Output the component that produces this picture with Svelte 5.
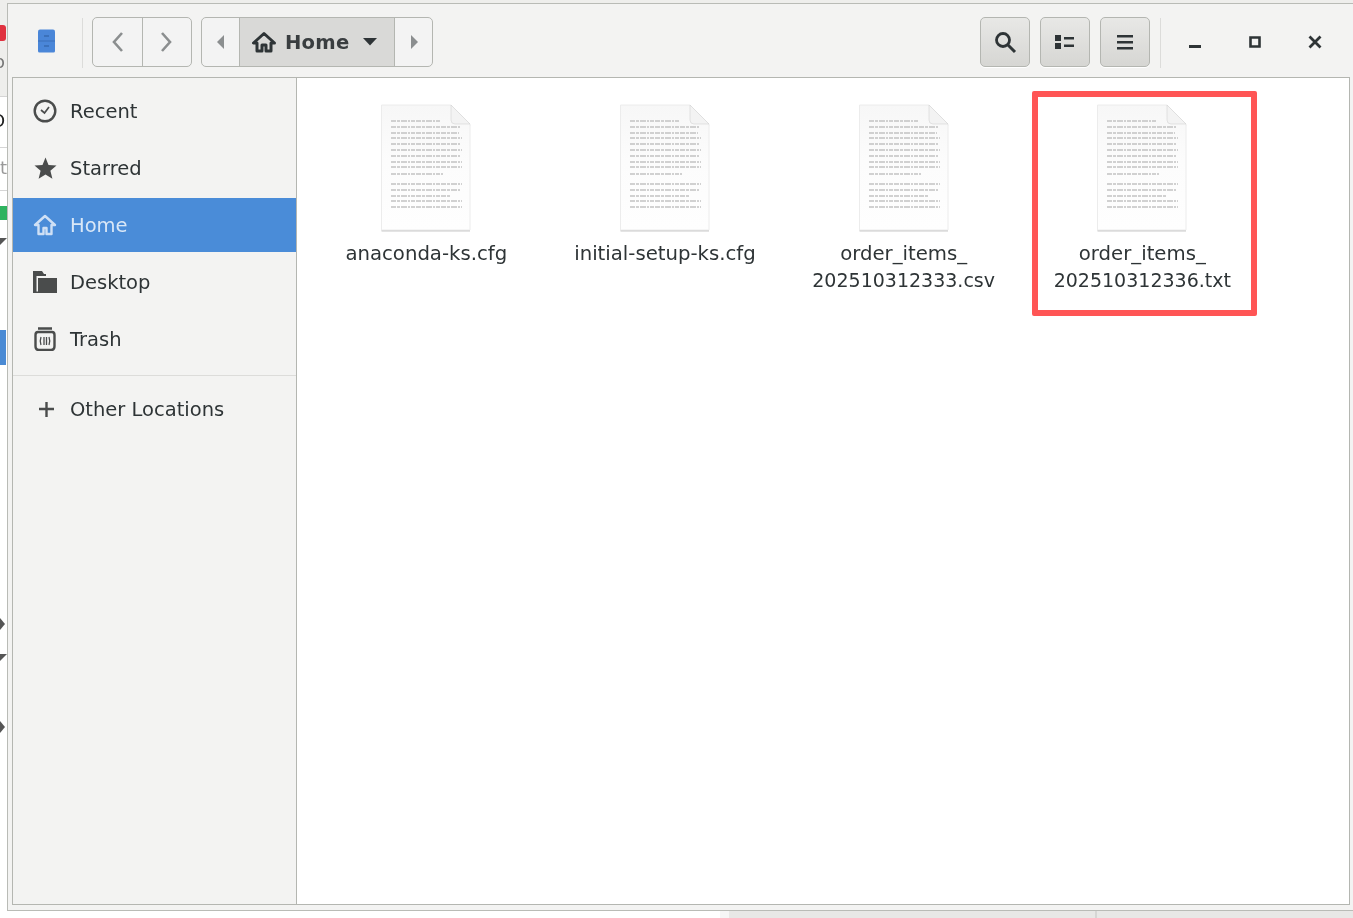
<script>
  const files = [
    { lines: ['anaconda-ks.cfg'] },
    { lines: ['initial-setup-ks.cfg'] },
    { lines: ['order_items_', '202510312333.csv'] },
    { lines: ['order_items_', '202510312336.txt'], marked: true }
  ];
  const rows = [
    { y: 18, w: 50 }, { y: 24, w: 70 }, { y: 30, w: 68 }, { y: 35, w: 71 }, { y: 41, w: 70 },
    { y: 47, w: 71 }, { y: 53, w: 70 }, { y: 59, w: 71 }, { y: 64, w: 71 }, { y: 71, w: 52 },
    { y: 81, w: 71 }, { y: 87, w: 70 }, { y: 93, w: 60 }, { y: 98, w: 71 }, { y: 104, w: 71 }
  ];
  const isNumeric = (line) => /^\d/.test(line);
</script>

<div class="desktop">
  <div class="backdrop">
    <i class="topband"></i><i class="leftband"></i>
    <i class="red"></i><i class="rule r1"></i><i class="rule r2"></i><i class="rule r3"></i>
    <i class="green"></i><i class="blue"></i>
    <i class="tri t1"></i><i class="tri t2"></i><i class="tri t3"></i><i class="tri t4"></i>
    <span class="peek p1">o</span><span class="peek p2">O</span><span class="peek p3">t</span>
    <div class="under"><span></span></div>
  </div>

  <div class="window">
    <header class="toolbar">
      <svg class="app" width="20" height="24" viewBox="0 0 20 24">
        <path d="M3 2.500q0-2 2-2h13q2 0 2 2V22q0 1.500-1.500 1.500h-14Q3 23.500 3 22z" fill="#4a86d8"/>
        <path d="M3 12h17" stroke="#3a6fb8"/>
        <path d="M9 7h5M9 17h5" stroke="#2d5c9e" stroke-width="1.200"/>
      </svg>
      <i class="sep"></i>
      <div class="group nav">
        <button aria-label="Back"><svg width="16" height="22" viewBox="0 0 16 22"><path d="M12 2 4 11l8 9" fill="none" stroke="#8b8e8f" stroke-width="2.600"/></svg></button>
        <button aria-label="Forward"><svg width="16" height="22" viewBox="0 0 16 22"><path d="m3 2 8 9-8 9" fill="none" stroke="#8b8e8f" stroke-width="2.600"/></svg></button>
      </div>
      <div class="group path">
        <button class="end" aria-label="Scroll left"><svg width="8" height="14" viewBox="0 0 8 14"><path d="M7 0v14L0 7z" fill="#8b8e8f"/></svg></button>
        <button class="current">
          <svg width="26" height="22" viewBox="0 0 26 22"><path d="M13 2.500 2.500 12H6v8h5v-6h4v6h5v-8h3.500z" fill="none" stroke="#2e3436" stroke-width="3" stroke-linejoin="round"/></svg>
          <b>Home</b>
          <svg class="caret" width="14" height="8" viewBox="0 0 14 8"><path d="M0 0h14L7 7.500z" fill="#2e3436"/></svg>
        </button>
        <button class="end" aria-label="Scroll right"><svg width="8" height="14" viewBox="0 0 8 14"><path d="M1 0v14l7-7z" fill="#8b8e8f"/></svg></button>
      </div>
      <div class="spacer"></div>
      <button class="tool" aria-label="Search"><svg width="24" height="24" viewBox="0 0 24 24"><circle cx="10" cy="10" r="6.500" fill="none" stroke="#2e3436" stroke-width="2.800"/><path d="m15 15 7 7" stroke="#2e3436" stroke-width="3"/></svg></button>
      <button class="tool" aria-label="View"><svg width="20" height="16" viewBox="0 0 20 16"><path d="M0 1h6v6H0zM0 9h6v6H0zM9 3h10v2.500H9zM9 10.500h10V13H9z" fill="#2e3436"/></svg></button>
      <button class="tool" aria-label="Menu"><svg width="18" height="16" viewBox="0 0 18 16"><path d="M1 1h16v2.500H1zM1 7h16v2.500H1zM1 13h16v2.500H1z" fill="#2e3436"/></svg></button>
      <i class="sep right"></i>
      <div class="controls">
        <span><svg width="14" height="14" viewBox="0 0 14 14"><path d="M1 10h12v3H1z" fill="#2e3436"/></svg></span>
        <span><svg width="14" height="14" viewBox="0 0 14 14"><path d="M2.500 2.500h9v9h-9z" fill="none" stroke="#2e3436" stroke-width="2.600"/></svg></span>
        <span><svg width="14" height="14" viewBox="0 0 14 14"><path d="m1.500 1.500 11 11m0-11-11 11" stroke="#2e3436" stroke-width="2.800"/></svg></span>
      </div>
    </header>

    <div class="body">
      <aside class="sidebar">
        <nav class="places">
          <div class="place">
            <svg width="24" height="24" viewBox="0 0 24 24"><circle cx="12" cy="12" r="10.300" fill="none" stroke="#4a4c4c" stroke-width="2.400"/><path d="m8 11 3.500 3L16 8" fill="none" stroke="#4a4c4c" stroke-width="1.700"/></svg>
            Recent
          </div>
          <div class="place">
            <svg width="24" height="24" viewBox="0 0 24 24"><path d="m12.500 1.500 3 7.500 8 .6-6.100 5.200 2 7.900-6.900-4.300-6.900 4.300 2-7.900L1.500 9.600l8-.6z" fill="#4a4c4c"/></svg>
            Starred
          </div>
          <div class="place active">
            <svg width="24" height="24" viewBox="0 0 24 24"><path d="M12 3 2 12h3.500v9h5v-6h3v6h5v-9H22z" fill="none" stroke="#cfe0f5" stroke-width="2.400" stroke-linejoin="round"/></svg>
            Home
          </div>
          <div class="place">
            <svg width="24" height="24" viewBox="0 0 24 24"><path d="M0 1h9l2 3h2v2H3.500v15.500H5V8h19v15H0z" fill="#4a4c4c"/></svg>
            Desktop
          </div>
          <div class="place">
            <svg width="24" height="24" viewBox="0 0 24 24"><path d="M5 1.500h14M2.500 8Q2.500 5 5 5h14q2.500 0 2.500 3v11q0 4-3.500 4H6q-3.500 0-3.500-4z" fill="none" stroke="#4a4c4c" stroke-width="2.400"/><path d="M8 10q-1.500 4 0 8M11 10v8M13.500 10v8M16 10q1.500 4 0 8" fill="none" stroke="#4a4c4c" stroke-width="1.300"/></svg>
            Trash
          </div>
        </nav>
        <hr />
        <div class="place other">
          <svg width="24" height="24" viewBox="0 0 24 24"><path d="M6 12h15M13.500 5v15" stroke="#4a4c4c" stroke-width="2.400"/></svg>
          Other Locations
        </div>
      </aside>

      <main class="files">
        {#each files as file}
          <article class="file" class:marked={file.marked}>
            <svg class="doc" width="92" height="130" viewBox="0 0 92 130">
              <defs><linearGradient id="fade" x1="0" y1="0" x2="0" y2="1"><stop offset="0" stop-color="#f7f7f7"/><stop offset="0.45" stop-color="#fcfcfc"/><stop offset="1" stop-color="#fefefe"/></linearGradient></defs>
              <path d="M1.500 2H71l19 19v106H1.500z" fill="#b5b5b5" transform="translate(0 1.500)" opacity=".7"/>
              <path d="M1.500 2H71l19 19v106H1.500z" fill="url(#fade)" stroke="#ececec"/>
              <path d="M71 2v15q0 4 4 4h15z" fill="#f3f3f3" stroke="#d4d4d4" stroke-width=".6"/>
              <g class="textlines">
                {#each rows as row}
                  <line x1="11" x2={11 + row.w} y1={row.y} y2={row.y} class="textline"/>
                {/each}
              </g>
            </svg>
            <div class="label">
              {#each file.lines as line}<div class:numeric={isNumeric(line)}>{line}</div>{/each}
            </div>
          </article>
        {/each}
      </main>
    </div>
  </div>
</div>

<style>
  :global(body) { margin: 0; background: #fff; overflow: hidden; }
  .desktop { position: relative; width: 1353px; height: 918px; overflow: hidden; font-family: "DejaVu Sans", sans-serif; color: #2e3436; padding: 3px 0 0 7px; box-sizing: border-box; filter: blur(0.55px); }
  i { display: block; }
  .backdrop { position: absolute; inset: 0; }
  .backdrop > i { position: absolute; }
  .topband { left: 0; right: 0; top: 0; height: 3px; background: #eeeeec; }
  .leftband { left: 0; top: 0; width: 7px; height: 96px; background: #eeeeec; }
  .red { left: 0; top: 25px; width: 6px; height: 16px; background: #e0313f; border-radius: 0 3px 3px 0; }
  .rule { left: 0; width: 7px; height: 1px; background: #d5d5d5; }
  .r1 { top: 96px; } .r2 { top: 147px; } .r3 { top: 190px; }
  .green { left: 0; top: 206px; width: 7px; height: 14px; background: #2eb35f; }
  .blue { left: 0; top: 330px; width: 6px; height: 35px; background: #4a8ad4; }
  .tri { left: 0; width: 0; height: 0; }
  .t1 { top: 238px; border-top: 7px solid #555; border-right: 7px solid transparent; }
  .t2 { top: 618px; border-left: 5px solid #555; border-top: 6px solid transparent; border-bottom: 6px solid transparent; }
  .t3 { top: 654px; border-top: 7px solid #555; border-right: 7px solid transparent; }
  .t4 { top: 721px; border-left: 5px solid #555; border-top: 6px solid transparent; border-bottom: 6px solid transparent; }
  .peek { position: absolute; font-size: 18px; line-height: 20px; }
  .p1 { left: -6px; top: 52px; color: #777; }
  .p2 { left: -9px; top: 111px; color: #222; }
  .p3 { left: 0; top: 158px; color: #999; }
  .under { position: absolute; left: 720px; right: 0; top: 911px; bottom: 0; background: #e8e8e6; border-left: 9px solid #f6f6f6; }
  .under span { display: block; height: 100%; margin-left: 366px; border-left: 2px solid #d6d6d4; }

  .window { position: relative; width: 1346px; height: 908px; box-sizing: border-box; border: 1px solid #b9bbb6; border-right: 0; background: #f3f3f2; display: flex; flex-direction: column; padding: 0 0 5px 4px; }
  .toolbar { height: 73px; margin-left: -4px; padding: 13px 0 0 27px; box-sizing: border-box; display: flex; align-items: flex-start; }
  .app { margin: 12px 0 0 0; flex: none; }
  .sep { width: 1px; height: 50px; background: #dcdcda; margin: 1px 9px 0 27px; flex: none; }
  .group { display: flex; height: 50px; box-sizing: border-box; border: 1px solid #b4b6b1; border-radius: 5px; overflow: hidden; background: #f3f3f3; flex: none; }
  .group button { border: 0; background: none; padding: 0; margin: 0; display: flex; align-items: center; justify-content: center; font: inherit; color: inherit; }
  .nav { width: 100px; margin-right: 9px; }
  .nav button { width: 49px; }
  .nav button + button { border-left: 1px solid #b4b6b1; width: 49px; }
  .path { width: 232px; }
  .path .end { width: 37px; flex: none; }
  .path .current { flex: 1; background: #d9d9d7; border-left: 1px solid #b4b6b1; border-right: 1px solid #b4b6b1; gap: 8px; justify-content: flex-start; padding-left: 11px; }
  .current b { font-size: 19.6px; font-weight: 700; color: #3a3e40; letter-spacing: 0.2px; }
  .caret { margin-left: 6px; }
  .spacer { flex: 1; }
  .tool { width: 50px; height: 50px; box-sizing: border-box; border: 1px solid #b4b6b1; border-radius: 5px; background: linear-gradient(#e8e8e6, #d6d6d3); padding: 0; margin-left: 10px; display: flex; align-items: center; justify-content: center; flex: none; box-shadow: 0 1px 0 #fff; }
  .sep.right { margin: 1px 0 0 10px; }
  .controls { display: flex; padding-right: 8px; padding-left: 4px; }
  .controls span { width: 60px; height: 50px; display: flex; align-items: center; justify-content: center; }

  .body { flex: 1; display: flex; min-height: 0; border: 1px solid #b4b6b1; margin-right: 3px; }
  .sidebar { width: 283px; flex: none; background: #f3f3f2; border-right: 1px solid #b4b6b1; padding-top: 6px; }
  .places { display: flex; flex-direction: column; gap: 3px; }
  .place { height: 54px; display: flex; align-items: center; gap: 13px; padding-left: 20px; font-size: 19.5px; color: #2e3436; }
  .place svg { flex: none; }
  .place.active { background: #4a8cd8; color: #d9e7f7; }
  hr { border: 0; height: 1px; background: #dcdcda; margin: 9px 0 6px; }
  .files { flex: 1; background: #fff; padding: 0 0 0 10px; display: grid; grid-template-columns: repeat(4, 238.67px); align-content: start; }
  .file { position: relative; display: flex; flex-direction: column; align-items: center; padding-top: 25px; }
  .doc { display: block; }
  .label { margin-top: 8px; text-align: center; font-size: 19.7px; line-height: 26px; color: #2e3436; }
  .label .numeric { font-size: 19px; }
  .marked::after { content: ""; position: absolute; left: 9px; top: 13px; width: 225px; height: 225px; box-sizing: border-box; border: 6px solid #ff5555; border-radius: 2px; pointer-events: none; }
  .textlines { filter: blur(0.4px); }
  .textline { stroke: #c2c2c2; stroke-width: 1.500; stroke-dasharray: 5 1 3 1 6 1 2 1 4 1; }
</style>
